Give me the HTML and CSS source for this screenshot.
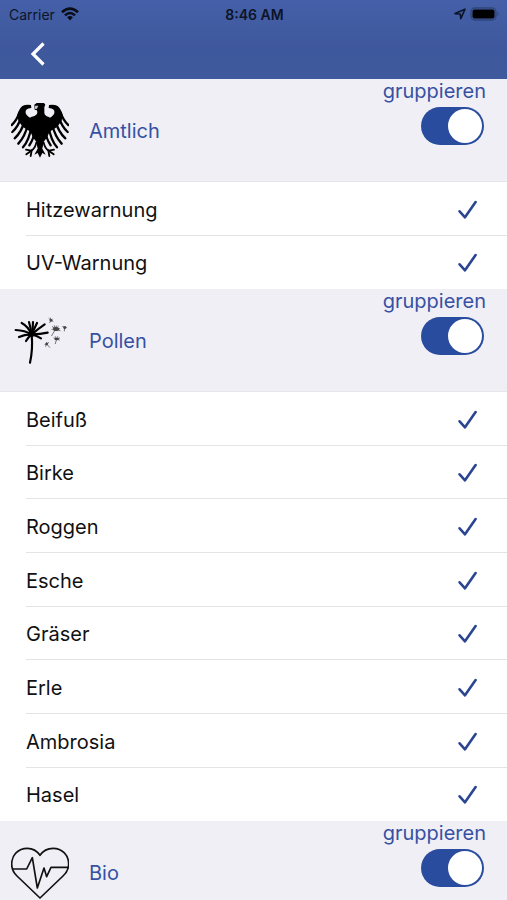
FILE: index.html
```html
<!DOCTYPE html>
<html lang="de">
<head>
  <meta charset="UTF-8" />
  <meta name="viewport" content="width=device-width, initial-scale=1.0"/>
  <title>Warnungen</title>
  <link rel="stylesheet" href="styles.css">
</head>
<body>
  <!-- shared check icon -->
  <svg class="sprite" aria-hidden="true">
    <symbol id="check" viewBox="0 0 20 20">
      <path d="M1.6 11.3 L7 17.3 L17.6 2" fill="none" stroke="currentColor" stroke-width="2.6" stroke-linecap="round" stroke-linejoin="round"/>
    </symbol>
  </svg>

  <div class="screen">
    <header class="topbar">
      <div class="status">
        <div class="status-left">
          <span>Carrier</span>
          <svg width="18" height="14" viewBox="0 0 18 14" aria-hidden="true">
            <g fill="none" stroke="#080d18" stroke-width="2.6">
              <path d="M1 5.2 Q9 -2 17 5.2"/>
              <path d="M4 8.4 Q9 3.6 14 8.4"/>
            </g>
            <path d="M6.1 10.3 Q9 7.9 11.9 10.3 L9 13.4 Z" fill="#080d18"/>
          </svg>
        </div>
        <span class="time">8:46 AM</span>
        <div class="status-right">
          <svg width="12" height="12" viewBox="0 0 12 12" aria-hidden="true">
            <path d="M1 5.6 L11 1.2 L6.8 10.6 L6.2 6 Z" fill="none" stroke="#0c1428" stroke-width="1.6" stroke-linejoin="round"/>
          </svg>
          <svg width="30" height="14" viewBox="0 0 30 14" aria-hidden="true">
            <rect x="1" y="1" width="25" height="12" rx="4" fill="none" stroke="#2f457b" stroke-width="1.4"/>
            <rect x="2.5" y="2.5" width="22" height="9" rx="2" fill="#000"/>
            <path d="M27.6 5 Q30 7 27.6 9 Z" fill="#2f457b"/>
          </svg>
        </div>
      </div>
      <nav class="navbar">
        <button class="back" type="button" aria-label="Zurück">
          <svg width="16" height="26" viewBox="0 0 16 26" aria-hidden="true">
            <path d="M13.5 2.5 L3 13 L13.5 23.5" fill="none" stroke="#fff" stroke-width="3.2"/>
          </svg>
        </button>
      </nav>
    </header>

    <main>
      <section>
        <div class="group-header">
          <svg class="group-icon" viewBox="9 9 174 174" aria-hidden="true">
            <!-- head, neck, body and tail -->
            <path d="M79 20 L86 15 H108 L112 20 L109 27 V44 Q110 53 121 56 L132 64 L126 98 Q119 118 107 132 L103 152 L113 170 L103 165 L96 179 L89 165 L79 170 L89 152 L85 132 Q73 118 66 98 L60 64 L71 56 Q86 53 88 44 L87 37 L80 35 Z"/>
            <path d="M81 23 L91 23 L87 32 L81 33 Z" fill="#c4c4c8"/>
            <!-- left wing, mirrored for the right one -->
            <g id="wing">
              <path d="M70 30 L69 21 Q54 18 43 24 Q32 34 28 52 L31 68 L44 86 L60 97 L80 106 L84 63 Q58 61 53 46 Q50 31 70 30 Z"/>
              <g fill="none" stroke="#000" stroke-width="7" stroke-linecap="round">
                <path d="M34 44 Q26 68 11 81"/>
                <path d="M40 56 Q31 86 13 102"/>
                <path d="M50 68 Q41 102 20 121"/>
                <path d="M60 78 Q51 116 31 137"/>
                <path d="M70 86 Q64 126 45 148"/>
                <path d="M80 96 Q78 122 64 142"/>
              </g>
              <g fill="none" stroke="#000" stroke-width="5.5" stroke-linecap="round">
                <path d="M85 134 Q81 152 70 158 L54 155"/>
                <path d="M70 158 L55 169"/>
                <path d="M71 157 L68 174"/>
              </g>
            </g>
            <use href="#wing" transform="matrix(-1 0 0 1 192 0)"/>
          </svg>
          <h2>Amtlich</h2>
          <label class="group-toggle">
            <span>gruppieren</span>
            <input type="checkbox" role="switch" checked>
          </label>
        </div>
        <ul class="rows">
          <li><label>Hitzewarnung <input type="checkbox" checked><svg><use href="#check"/></svg></label></li>
          <li><label>UV-Warnung <input type="checkbox" checked><svg><use href="#check"/></svg></label></li>
        </ul>
      </section>

      <section>
        <div class="group-header">
          <svg class="group-icon" viewBox="33 33 174 174" aria-hidden="true">
            <!-- dandelion -->
            <g fill="none" stroke="#000" stroke-width="6.5" stroke-linecap="round">
              <path d="M95 103 Q99 148 90 188"/>
              <path d="M95 103 Q75 91 47 90"/>
              <path d="M95 103 Q83 78 65 69"/>
              <path d="M95 103 Q91 80 87 66"/>
              <path d="M95 103 Q99 82 99 66"/>
              <path d="M95 103 Q104 84 111 69"/>
              <path d="M95 103 Q115 86 134 73"/>
              <path d="M95 103 Q121 103 143 98"/>
              <path d="M95 103 Q76 102 57 111"/>
              <path d="M95 103 Q84 112 78 123"/>
              <path d="M95 103 Q110 108 123 115"/>
            </g>
            <ellipse cx="95" cy="103" rx="12" ry="7"/>
            <!-- flying seeds -->
            <g fill="none" stroke="#333" stroke-width="2" stroke-linecap="round">
              <path d="M153 61 L149 68 M153 61 L147 56 M153 61 L151 54 M153 61 L157 57 M153 61 L159 64"/>
              <path d="M167 87 L155 107 M167 87 L157 80 M167 87 L163 77 M167 87 L169 78 M167 87 L175 79 M167 87 L179 86 M167 87 L180 92 M167 87 L156 88"/>
              <path d="M194 83 L193 93 M194 83 L188 80 M194 83 L192 79 M194 83 L197 79 M194 83 L200 83"/>
              <path d="M170 117 L166 131 M170 117 L162 114 M170 117 L166 110 M170 117 L173 110 M170 117 L179 114 M170 117 L178 120"/>
              <path d="M140 132 L149 142 M140 132 L137 139 M140 132 L135 133 M140 132 L140 127 M140 132 L146 128"/>
            </g>
            <g fill="#444">
              <circle cx="153" cy="61" r="4"/>
              <ellipse cx="168" cy="87" rx="9" ry="6"/>
              <circle cx="194" cy="83" r="4"/>
              <ellipse cx="170" cy="117" rx="7" ry="4"/>
              <circle cx="140" cy="132" r="4"/>
            </g>
          </svg>
          <h2>Pollen</h2>
          <label class="group-toggle">
            <span>gruppieren</span>
            <input type="checkbox" role="switch" checked>
          </label>
        </div>
        <ul class="rows">
          <li><label>Beifuß <input type="checkbox" checked><svg><use href="#check"/></svg></label></li>
          <li><label>Birke <input type="checkbox" checked><svg><use href="#check"/></svg></label></li>
          <li><label>Roggen <input type="checkbox" checked><svg><use href="#check"/></svg></label></li>
          <li><label>Esche <input type="checkbox" checked><svg><use href="#check"/></svg></label></li>
          <li><label>Gräser <input type="checkbox" checked><svg><use href="#check"/></svg></label></li>
          <li><label>Erle <input type="checkbox" checked><svg><use href="#check"/></svg></label></li>
          <li><label>Ambrosia <input type="checkbox" checked><svg><use href="#check"/></svg></label></li>
          <li><label>Hasel <input type="checkbox" checked><svg><use href="#check"/></svg></label></li>
        </ul>
      </section>

      <section>
        <div class="group-header">
          <svg class="group-icon" viewBox="33 69 174 174" aria-hidden="true">
            <g fill="none" stroke="#111" stroke-width="5" stroke-linejoin="round">
              <path d="M120 106 Q106 85 82 85 C54 85 35 106 35 132 Q35 153 51 168 L120 234 L189 168 Q206 153 206 132 C206 106 187 85 159 85 Q134 85 120 106 Z"/>
              <path d="M36 147 H80 L97 113 L112 204 L132 144 L140 170 L153 142 H205"/>
            </g>
          </svg>
          <h2>Bio</h2>
          <label class="group-toggle">
            <span>gruppieren</span>
            <input type="checkbox" role="switch" checked>
          </label>
        </div>
      </section>
    </main>
  </div>
</body>
</html>
```

FILE: styles.css
```css
* {
  box-sizing: border-box;
}

body {
  margin: 0;
  font-family: Inter, "Liberation Sans", sans-serif;
  font-size: 20px;
  color: #111;
  background-color: #f0eff5;
}

.sprite {
  display: none;
}

.screen {
  height: 100vh;
  overflow: hidden;
}

/* top bar */
.topbar {
  height: 79px;
  background: linear-gradient(#4560a8, #3f589d 60%, #3e5a9c);
}

.status {
  display: grid;
  grid-template-columns: 1fr auto 1fr;
  align-items: center;
  height: 28px;
  padding: 0 7px 0 9px;
  font-size: 14px;
  color: #0c1428;
}

.status-left,
.status-right {
  display: flex;
  align-items: center;
  gap: 6px;
}

.status-right {
  justify-content: flex-end;
  gap: 4px;
}

.time {
  font-weight: 600;
}

.navbar {
  display: flex;
  align-items: center;
  height: 51px;
  padding-left: 22px;
}

.back {
  display: flex;
  padding: 8px;
  border: none;
  background: none;
  cursor: pointer;
}

/* group header */
.group-header {
  display: flex;
  align-items: center;
  height: 103px;
  padding: 0 21px 0 11px;
  background-color: #f0eff5;
  border-bottom: 1px solid #e6e6ea;
}

.group-icon {
  width: 58px;
  height: 58px;
  margin-right: 20px;
}

.group-header h2 {
  flex: 1;
  margin: 0;
  padding-top: 2px;
  font-size: 20px;
  font-weight: 400;
  color: #3651a4;
}

.group-toggle {
  display: flex;
  flex-direction: column;
  align-items: flex-end;
  align-self: flex-start;
  gap: 4px;
  line-height: 24px;
  color: #3651a4;
}

.group-toggle input {
  appearance: none;
  display: flex;
  width: 63px;
  height: 38px;
  margin: 0 2px 0 0;
  padding: 2px;
  border-radius: 19px;
  background-color: #c8c8d0;
  cursor: pointer;
}

.group-toggle input::before {
  content: "";
  width: 34px;
  height: 34px;
  border-radius: 50%;
  background-color: white;
}

.group-toggle input:checked {
  justify-content: flex-end;
  background-color: #2a4c9f;
}

/* rows */
.rows {
  margin: 0;
  padding: 0 0 0 26px;
  list-style: none;
  background-color: white;
}

.rows li {
  height: 54px;
  border-bottom: 1px solid #e4e4e7;
}

.rows li:nth-child(3n+2) {
  height: 53px;
}

.rows li:last-child {
  border-bottom-color: white;
}

.rows label {
  display: flex;
  justify-content: space-between;
  align-items: center;
  height: 100%;
  padding: 2px 29px 0 0;
  cursor: pointer;
}

.rows input {
  appearance: none;
  width: 20px;
  height: 20px;
  margin: 0 -20px 0 auto;
}

.rows svg {
  width: 20px;
  height: 20px;
  color: #2a4690;
  visibility: hidden;
}

.rows input:checked + svg {
  visibility: visible;
}
```
